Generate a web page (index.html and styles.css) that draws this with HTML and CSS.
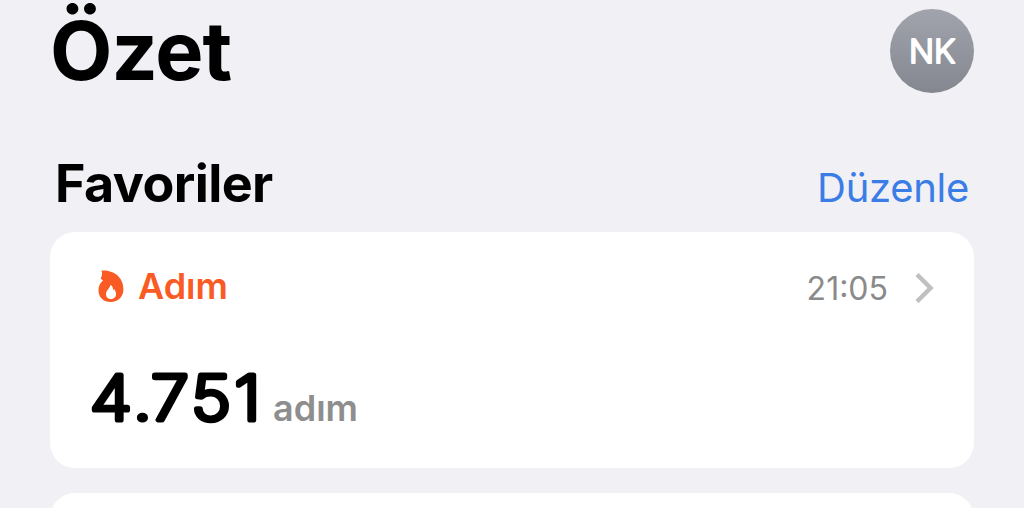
FILE: index.html
```html
<!DOCTYPE html>
<html lang="tr">
<head>
    <meta charset="UTF-8">
    <meta name="viewport" content="width=device-width, initial-scale=1.0">
    <title>Özet</title>
    <link rel="stylesheet" href="styles.css">
</head>
<body>
    <div class="container">
        <header class="header">
            <h1>Özet</h1>
            <div class="avatar">
                <svg width="84" height="84" viewBox="0 0 84 84">
                    <text class="initials" x="19 44" y="54">NK</text>
                </svg>
            </div>
        </header>

        <div class="section-title">
            <h2>Favoriler</h2>
            <a class="edit-link">Düzenle</a>
        </div>

        <!-- Steps card -->
        <div class="card">
            <div class="card-header">
                <svg class="flame" width="26" height="33" viewBox="0 0 26 33">
                    <path fill="#fa5a23" fill-rule="evenodd" d="M3.5 .6C13 -.6 25.6 5.5 25.4 19.5C25.3 27 20 32 12.8 32C5.5 32 .5 27.3 .5 20.5C.5 16 2 13.4 5 10.6L2.6 8.4C4.2 5.8 4.6 3.4 3.5 .6ZM12.4 14.8C12.4 18 8 20.3 8 24.2C8 27.3 10 29 12.8 29C15.7 29 18 27.1 18 24.2C18 22.3 17.4 20.4 16.2 19L15.3 20.5C15.3 18 14.2 16 12.4 14.8Z"/>
                </svg>
                <span class="card-name">Adım</span>
                <span class="time">21:05</span>
                <svg class="chevron" width="20" height="32" viewBox="0 0 20 32">
                    <path d="M3 3.5L16.5 17L3 30.5"/>
                </svg>
            </div>
            <div class="value-row">
                <svg class="value" width="178" height="68" viewBox="0 0 178 68">
                    <text transform="scale(1.12 1)" x="0 38.3 54.5 90.5 129" y="51.5">4.751</text>
                </svg>
                <span class="unit">adım</span>
            </div>
        </div>

        <div class="card"></div>
    </div>
</body>
</html>
```
FILE: styles.css
```css
* {
    box-sizing: border-box;
    margin: 0;
    padding: 0;
}

body {
    background-color: #f1f0f5;
    color: #000;
    font-family: Inter, "Liberation Sans", sans-serif;
}

.container {
    height: 508px;
    padding: 0 50px;
    overflow: hidden;
}

.header {
    display: flex;
    justify-content: space-between;
    align-items: center;
    height: 101px;
}

h1 {
    padding-top: 2px;
    font-size: 81px;
    font-weight: 700;
    line-height: 101px;
    letter-spacing: -1px;
}

.avatar {
    width: 84px;
    height: 84px;
    border-radius: 50%;
    background: linear-gradient(#a2a4ad, #858790);
}

.avatar svg {
    display: block;
}

.initials {
    fill: #fff;
    stroke: #fff;
    stroke-width: 2;
    stroke-linejoin: round;
    font-size: 33px;
    font-weight: 300;
}

.section-title {
    display: flex;
    justify-content: space-between;
    align-items: baseline;
    height: 131px;
    padding: 50px 5px 0 5px;
}

h2 {
    font-size: 52px;
    font-weight: 700;
    line-height: 65px;
    letter-spacing: -0.6px;
}

.edit-link {
    color: #3b7de6;
    font-size: 40px;
    line-height: 50px;
    letter-spacing: -0.3px;
}

.card {
    height: 236px;
    margin-bottom: 25px;
    padding: 34px 40px 0;
    background-color: #fff;
    border-radius: 25px;
}

.card-header {
    display: flex;
    align-items: center;
    height: 42px;
}

.flame {
    margin: -2px 14px 0 8px;
}

.card-name {
    margin-top: -2px;
    color: #fa5a23;
    font-size: 36px;
    font-weight: 600;
}

.time {
    margin-left: auto;
    margin-right: 26px;
    padding-top: 2px;
    color: #8a8a8a;
    font-size: 32px;
}

.chevron path {
    fill: none;
    stroke: #c0c0c0;
    stroke-width: 4.5;
}

.value-row {
    display: flex;
    align-items: flex-end;
    height: 128px;
}

.value {
    overflow: visible;
}

.value text {
    stroke: #000;
    stroke-width: 5.2;
    stroke-linejoin: round;
    font-size: 61px;
    font-weight: 200;
}

.unit {
    margin-left: 5px;
    padding-bottom: 6px;
    color: #8e8e8e;
    font-size: 36px;
    font-weight: 600;
    line-height: 44px;
}
```
